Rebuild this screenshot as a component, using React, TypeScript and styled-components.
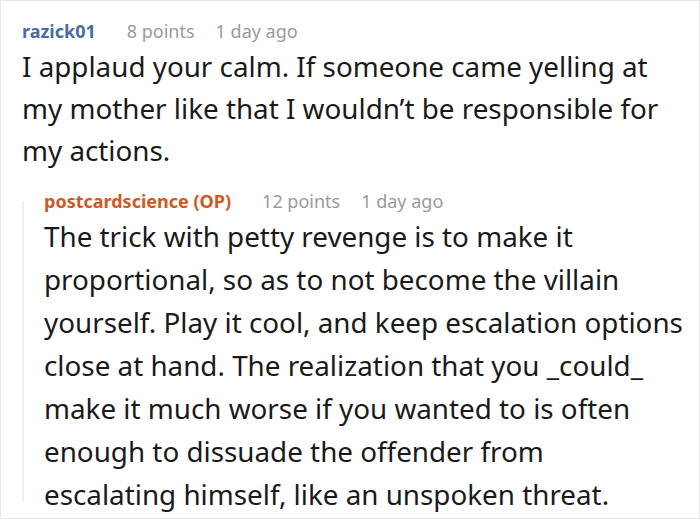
import styled, { createGlobalStyle } from "styled-components";

const GlobalStyle = createGlobalStyle`
  html, body {
    margin: 0;
    padding: 0;
    background: #fff;
  }
  body {
    font-family: "Noto Sans", "Open Sans", sans-serif;
  }
`;

const Frame = styled.section`
  width: 700px;
  height: 519px;
  box-sizing: border-box;
  border: 1px solid #e6e6e6;
  overflow: hidden;
  padding: 16px 8px 0 21px;
`;

const Comment = styled.article`
  display: flex;
  flex-direction: column;
`;

const Reply = styled.div`
  margin-top: 16px;
  display: flex;
`;

const ThreadLine = styled.div`
  flex: none;
  width: 2px;
  margin: 14px 20px 15px 0;
  background: #eeeeee;
`;

const Meta = styled.div`
  display: flex;
  align-items: baseline;
  font-size: 18px;
  line-height: 28px;
`;

const Author = styled.span<{ $color: string }>`
  color: ${(p) => p.$color};
  font-weight: 700;
  margin-right: 31px;
`;

const Stat = styled.span`
  color: #9a9a9a;
  margin-right: 21px;
`;

const Body = styled.p<{ $lh: number }>`
  margin: 0;
  font-size: 27.8px;
  line-height: ${(p) => p.$lh}px;
  color: #1a1a1b;
`;

export default function App() {
  return (
    <>
      <GlobalStyle />
      <Frame>
        <Comment>
          <Meta>
            <Author $color="#4a6ca6">razick01</Author>
            <Stat>8 points</Stat>
            <Stat>1 day ago</Stat>
          </Meta>
          <Body $lh={42}>
            I applaud your calm. If someone came yelling at my mother like
            that I wouldn’t be responsible for my actions.
          </Body>
          <Reply>
            <ThreadLine />
            <Comment>
              <Meta>
                <Author $color="#cc5a26">postcardscience (OP)</Author>
                <Stat>12 points</Stat>
                <Stat>1 day ago</Stat>
              </Meta>
              <Body $lh={43}>
                The trick with petty revenge is to make it proportional, so as
                to not become the villain yourself. Play it cool, and keep
                escalation options close at hand. The realization that you
                _could_ make it much worse if you wanted to is often enough to
                dissuade the offender from
                <br />
                escalating himself, like an unspoken threat.
              </Body>
            </Comment>
          </Reply>
        </Comment>
      </Frame>
    </>
  );
}
